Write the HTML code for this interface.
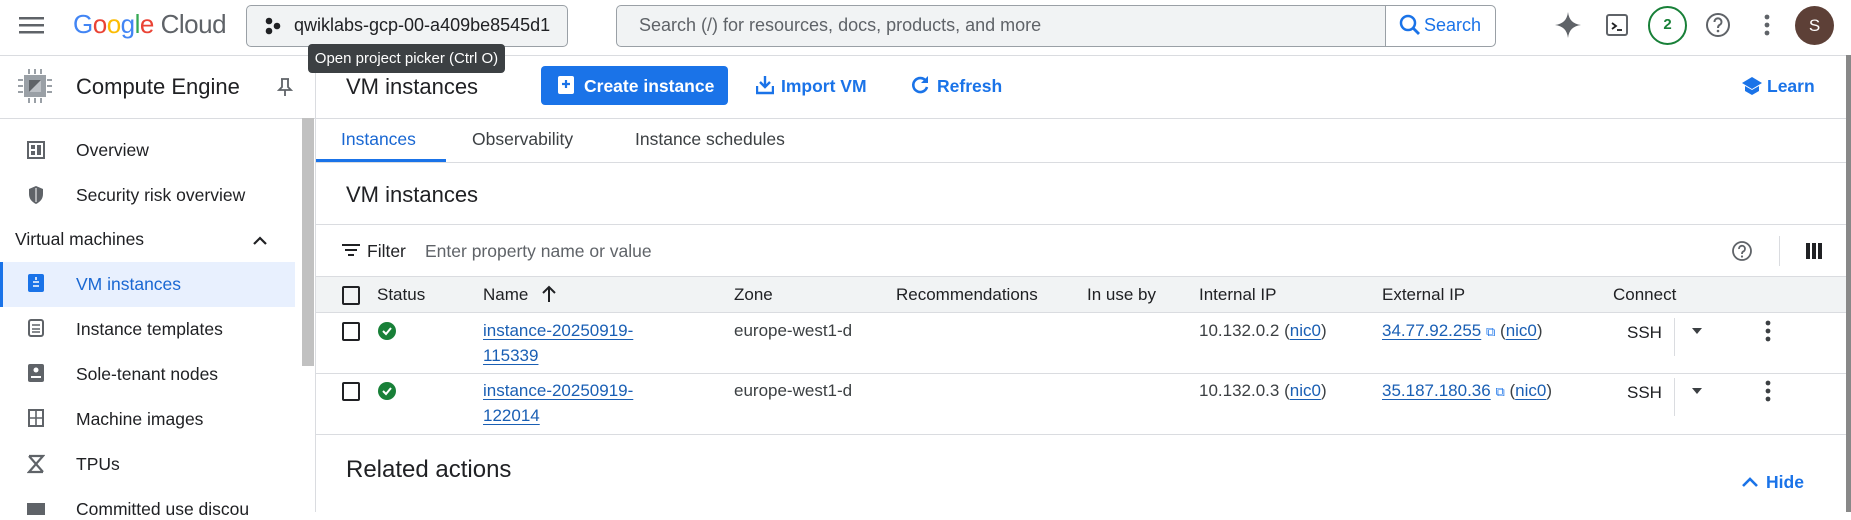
<!DOCTYPE html>
<html><head><meta charset="utf-8"><style>
*{box-sizing:border-box;margin:0;padding:0}
body{width:1851px;height:512px;overflow:hidden;background:#fff;font-family:"Liberation Sans",Arial,sans-serif;color:#202124;position:relative}
.a{position:absolute;white-space:nowrap}
.l{color:#1a73e8}
.lk{color:#1a5fb4;text-decoration:underline;text-underline-offset:3px}
.g{color:#5f6368}
.ic{position:absolute}
</style></head><body>
<!-- top bar -->
<div class="a" style="left:0;top:55px;width:1851px;height:1px;background:#dadce0"></div>
<svg class="ic" style="left:19px;top:15px" width="25" height="20" viewBox="0 0 25 20"><rect y="2" width="25" height="2.5" fill="#5f6368"/><rect y="9" width="25" height="2.5" fill="#5f6368"/><rect y="16" width="25" height="2.5" fill="#5f6368"/></svg>
<div class="a" style="left:73px;top:9px;font-size:26px;letter-spacing:-0.5px"><span style="color:#4285f4">G</span><span style="color:#ea4335">o</span><span style="color:#fbbc04">o</span><span style="color:#4285f4">g</span><span style="color:#34a853">l</span><span style="color:#ea4335">e</span> <span style="color:#5f6368">Cloud</span></div>
<div class="a" style="left:246px;top:5px;width:322px;height:42px;border:1px solid #9aa0a6;border-radius:5px;background:#f1f3f4"></div>
<svg class="ic" style="left:265px;top:17px" width="18" height="18" viewBox="0 0 18 18"><circle cx="4" cy="4" r="3.3" fill="#202124"/><circle cx="12" cy="9" r="3.3" fill="#202124"/><circle cx="4" cy="14" r="3.3" fill="#202124"/></svg>
<div class="a" style="left:294px;top:15px;font-size:18px">qwiklabs-gcp-00-a409be8545d1</div>
<div class="a" style="left:616px;top:5px;width:880px;height:42px;border:1px solid #9aa0a6;border-radius:5px;background:#f1f3f4"></div>
<div class="a" style="left:1385px;top:6px;width:110px;height:40px;background:#fff;border-left:1px solid #9aa0a6;border-radius:0 5px 5px 0"></div>
<div class="a g" style="left:639px;top:15px;font-size:18px">Search (/) for resources, docs, products, and more</div>
<svg class="ic" style="left:1398px;top:13px" width="24" height="24" viewBox="0 0 24 24"><circle cx="10" cy="10" r="7" fill="none" stroke="#1a73e8" stroke-width="2.5"/><path d="M15 15l6 6" stroke="#1a73e8" stroke-width="2.8"/></svg>
<div class="a l" style="left:1424px;top:15px;font-size:18px">Search</div>
<svg class="ic" style="left:1554px;top:11px" width="28" height="28" viewBox="0 0 28 28"><path d="M14 1C15 9 19 13 27 14 19 15 15 19 14 27 13 19 9 15 1 14 9 13 13 9 14 1Z" fill="#5f6368"/></svg>
<svg class="ic" style="left:1606px;top:14px" width="22" height="22" viewBox="0 0 22 22"><rect x="1" y="1" width="20" height="20" rx="2" fill="none" stroke="#5f6368" stroke-width="2"/><path d="M6 9l4 3-4 3" fill="none" stroke="#202124" stroke-width="1.8"/><path d="M11 16h5" stroke="#202124" stroke-width="1.8"/></svg>
<div class="a" style="left:1648px;top:6px;width:39px;height:39px;border:2.5px solid #188038;border-radius:50%;color:#188038;font-size:15px;font-weight:bold;text-align:center;line-height:34px">2</div>
<svg class="ic" style="left:1705px;top:12px" width="26" height="26" viewBox="0 0 26 26"><circle cx="13" cy="13" r="11" fill="none" stroke="#5f6368" stroke-width="2"/><path d="M9.5 10a3.5 3.5 0 1 1 5 3c-1.2.7-1.5 1.3-1.5 3" fill="none" stroke="#5f6368" stroke-width="2"/><circle cx="13" cy="19" r="1.3" fill="#5f6368"/></svg>
<svg class="ic" style="left:1763px;top:13px" width="8" height="24" viewBox="0 0 8 24"><circle cx="4" cy="4" r="2.4" fill="#5f6368"/><circle cx="4" cy="12" r="2.4" fill="#5f6368"/><circle cx="4" cy="20" r="2.4" fill="#5f6368"/></svg>
<div class="a" style="left:1795px;top:6px;width:39px;height:39px;border-radius:50%;background:#5d4037;color:#fff;font-size:17px;text-align:center;line-height:39px">S</div>
<div class="a" style="left:1846px;top:55px;width:5px;height:457px;background:#888"></div>

<!-- sidebar -->
<div class="a" style="left:315px;top:55px;width:1px;height:457px;background:#dadce0"></div>
<div class="a" style="left:0;top:118px;width:315px;height:1px;background:#dadce0"></div>
<svg class="ic" style="left:17px;top:68px" width="36" height="36" viewBox="0 0 36 36"><rect x="7" y="7" width="22" height="22" fill="#9aa0a6"/><rect x="12" y="12" width="12" height="12" fill="#5f6368"/><path d="M12 24L24 12V24Z" fill="#bdc1c6"/><g stroke="#9aa0a6" stroke-width="2"><path d="M12 1v5M18 1v5M24 1v5M12 30v5M18 30v5M24 30v5M1 12h5M1 18h5M1 24h5M30 12h5M30 18h5M30 24h5"/></g></svg>
<div class="a" style="left:76px;top:74px;font-size:22px">Compute Engine</div>
<svg class="ic" style="left:277px;top:77px" width="16" height="20" viewBox="0 0 16 20"><path d="M4 2h8M5 2v8l-3 3h12l-3-3V2M8 13v6" fill="none" stroke="#5f6368" stroke-width="1.8"/></svg>
<div class="a" style="left:302px;top:118px;width:12px;height:248px;background:#c1c1c1"></div>
<div class="a" style="left:0;top:262px;width:295px;height:45px;background:#e8f0fe;border-left:3px solid #1a73e8"></div>
<svg class="ic" style="left:27px;top:141px" width="18" height="18" viewBox="0 0 18 18"><rect x="1" y="1" width="16" height="16" fill="none" stroke="#5f6368" stroke-width="2"/><rect x="4" y="4" width="4" height="4" fill="#5f6368"/><rect x="10" y="4" width="4" height="10" fill="#5f6368"/><rect x="4" y="10" width="4" height="4" fill="#5f6368"/></svg>
<div class="a" style="left:76px;top:140px;font-size:17.5px">Overview</div>
<svg class="ic" style="left:28px;top:185px" width="16" height="20" viewBox="0 0 16 20"><path d="M8 1L1 4v5c0 5 3 8 7 10 4-2 7-5 7-10V4Z" fill="#5f6368"/><path d="M8 3v14" stroke="#fff" stroke-width="1"/></svg>
<div class="a" style="left:76px;top:185px;font-size:17.5px">Security risk overview</div>
<div class="a" style="left:15px;top:229px;font-size:17.5px;font-weight:500">Virtual machines</div>
<svg class="ic" style="left:252px;top:234px" width="16" height="12" viewBox="0 0 16 12"><path d="M2 10l6-6 6 6" fill="none" stroke="#202124" stroke-width="2.2"/></svg>
<svg class="ic" style="left:28px;top:274px" width="16" height="20" viewBox="0 0 16 20"><rect x="0" y="0" width="16" height="18" rx="2" fill="#1a73e8"/><path d="M5 8h6M5 12h6" stroke="#fff" stroke-width="1.6"/><path d="M8 3v3" stroke="#fff" stroke-width="1.6"/></svg>
<div class="a l" style="left:76px;top:274px;font-size:17.5px;color:#1967d2">VM instances</div>
<svg class="ic" style="left:28px;top:319px" width="16" height="20" viewBox="0 0 16 20"><rect x="1" y="1" width="14" height="16" rx="2" fill="none" stroke="#5f6368" stroke-width="2"/><path d="M4 6h8M4 10h8M4 13h8" stroke="#5f6368" stroke-width="1.6"/></svg>
<div class="a" style="left:76px;top:319px;font-size:17.5px">Instance templates</div>
<svg class="ic" style="left:28px;top:364px" width="16" height="20" viewBox="0 0 16 20"><rect x="0" y="0" width="16" height="18" rx="2" fill="#5f6368"/><circle cx="8" cy="6" r="2.5" fill="#fff"/><path d="M3 13h10" stroke="#fff" stroke-width="2"/></svg>
<div class="a" style="left:76px;top:364px;font-size:17.5px">Sole-tenant nodes</div>
<svg class="ic" style="left:28px;top:409px" width="16" height="20" viewBox="0 0 16 20"><rect x="1" y="1" width="14" height="16" fill="none" stroke="#5f6368" stroke-width="2"/><path d="M8 2v14M2 9h12" stroke="#5f6368" stroke-width="1.6"/></svg>
<div class="a" style="left:76px;top:409px;font-size:17.5px">Machine images</div>
<svg class="ic" style="left:27px;top:454px" width="18" height="20" viewBox="0 0 18 20"><path d="M2 2h14L2 18h14M2 2l14 16" fill="none" stroke="#5f6368" stroke-width="2.2"/></svg>
<div class="a" style="left:76px;top:454px;font-size:17.5px">TPUs</div>
<div class="a" style="left:27px;top:503px;width:18px;height:12px;background:#5f6368"></div>
<div class="a" style="left:76px;top:499px;font-size:17.5px">Committed use discou</div>

<!-- main header -->
<div class="a" style="left:346px;top:74px;font-size:22px">VM instances</div>
<div class="a" style="left:541px;top:66px;width:187px;height:39px;background:#1a73e8;border-radius:4px"></div>
<svg class="ic" style="left:558px;top:76px" width="16" height="20" viewBox="0 0 16 20"><rect x="0" y="0" width="16" height="18" rx="2" fill="#fff"/><path d="M8 4v8M4 8h8" stroke="#1a73e8" stroke-width="2.2"/></svg>
<div class="a" style="left:584px;top:76px;font-size:17.5px;color:#fff;font-weight:bold">Create instance</div>
<svg class="ic" style="left:756px;top:75px" width="18" height="20" viewBox="0 0 18 20"><path d="M9 1v10M4 7l5 5 5-5" fill="none" stroke="#1a73e8" stroke-width="2.4"/><path d="M1 11v7h16v-7" fill="none" stroke="#1a73e8" stroke-width="2.4"/></svg>
<div class="a l" style="left:781px;top:76px;font-size:17.5px;font-weight:bold">Import VM</div>
<svg class="ic" style="left:910px;top:75px" width="20" height="20" viewBox="0 0 20 20"><path d="M16 6A7 7 0 1 0 17 12" fill="none" stroke="#1a73e8" stroke-width="2.6"/><path d="M18 1v7h-7Z" fill="#1a73e8"/></svg>
<div class="a l" style="left:937px;top:76px;font-size:17.5px;font-weight:bold">Refresh</div>
<svg class="ic" style="left:1741px;top:76px" width="22" height="20" viewBox="0 0 22 20"><path d="M11 1L1 7l10 6 10-6Z" fill="#1a73e8"/><path d="M4 10v5l7 4 7-4v-5l-7 4Z" fill="#1a73e8"/></svg>
<div class="a l" style="left:1767px;top:76px;font-size:17.5px;font-weight:bold">Learn</div>
<div class="a" style="left:316px;top:118px;width:1530px;height:1px;background:#dadce0"></div>
<!-- tabs -->
<div class="a" style="left:341px;top:129px;font-size:17.5px;color:#1967d2">Instances</div>
<div class="a" style="left:316px;top:159px;width:130px;height:3px;background:#1a73e8"></div>
<div class="a g" style="left:472px;top:129px;font-size:17.5px;color:#3c4043">Observability</div>
<div class="a g" style="left:635px;top:129px;font-size:17.5px;color:#3c4043">Instance schedules</div>
<div class="a" style="left:316px;top:162px;width:1530px;height:1px;background:#dadce0"></div>
<div class="a" style="left:346px;top:182px;font-size:22px">VM instances</div>
<div class="a" style="left:316px;top:224px;width:1530px;height:1px;background:#dadce0"></div>
<!-- filter -->
<svg class="ic" style="left:342px;top:243px" width="18" height="14" viewBox="0 0 18 14"><path d="M0 2h18M3 7h12M6 12h6" stroke="#202124" stroke-width="2"/></svg>
<div class="a" style="left:367px;top:241px;font-size:17.5px;font-weight:500">Filter</div>
<div class="a g" style="left:425px;top:241px;font-size:17.5px">Enter property name or value</div>
<svg class="ic" style="left:1731px;top:240px" width="22" height="22" viewBox="0 0 22 22"><circle cx="11" cy="11" r="9" fill="none" stroke="#5f6368" stroke-width="1.8"/><path d="M8 9a3 3 0 1 1 4 2.6c-.8.5-1 1-1 2.4" fill="none" stroke="#5f6368" stroke-width="1.8"/><circle cx="11" cy="16.5" r="1.1" fill="#5f6368"/></svg>
<div class="a" style="left:1779px;top:236px;width:1px;height:30px;background:#dadce0"></div>
<svg class="ic" style="left:1806px;top:243px" width="16" height="16" viewBox="0 0 16 16"><rect x="0" y="0" width="4" height="16" fill="#202124"/><rect x="6" y="0" width="4" height="16" fill="#202124"/><rect x="12" y="0" width="4" height="16" fill="#202124"/></svg>
<!-- table header -->
<div class="a" style="left:316px;top:276px;width:1530px;height:37px;background:#f1f3f4;border-top:1px solid #dadce0;border-bottom:1px solid #dadce0"></div>
<div class="a" style="left:342px;top:286px;width:18px;height:19px;border:2px solid #202124;border-radius:2px"></div>
<div class="a" style="left:377px;top:285px;font-size:17px">Status</div>
<div class="a" style="left:483px;top:285px;font-size:17px">Name</div>
<svg class="ic" style="left:541px;top:285px" width="16" height="18" viewBox="0 0 16 18"><path d="M8 17V2M2 8l6-6 6 6" fill="none" stroke="#202124" stroke-width="2"/></svg>
<div class="a" style="left:734px;top:285px;font-size:17px">Zone</div>
<div class="a" style="left:896px;top:285px;font-size:17px">Recommendations</div>
<div class="a" style="left:1087px;top:285px;font-size:17px">In use by</div>
<div class="a" style="left:1199px;top:285px;font-size:17px">Internal IP</div>
<div class="a" style="left:1382px;top:285px;font-size:17px">External IP</div>
<div class="a" style="left:1613px;top:285px;font-size:17px">Connect</div>
<!-- rows -->
<div class="a" style="left:316px;top:373px;width:1530px;height:1px;background:#dadce0"></div>
<div class="a" style="left:316px;top:434px;width:1530px;height:1px;background:#dadce0"></div>

<div class="a" style="left:342px;top:322px;width:18px;height:19px;border:2px solid #202124;border-radius:2px"></div>
<svg class="ic" style="left:378px;top:322px" width="18" height="18" viewBox="0 0 18 18"><circle cx="9" cy="9" r="9" fill="#188038"/><path d="M5 9l3 3 5-6" fill="none" stroke="#fff" stroke-width="2"/></svg>
<div class="a lk" style="left:483px;top:321px;font-size:17px">instance-20250919-</div>
<div class="a lk" style="left:483px;top:346px;font-size:17px">115339</div>
<div class="a g" style="left:734px;top:321px;font-size:17px;color:#3c4043">europe-west1-d</div>
<div class="a" style="left:1199px;top:321px;font-size:17px;color:#3c4043">10.132.0.2 (<span class="lk">nic0</span>)</div>
<div class="a" style="left:1382px;top:321px;font-size:17px;color:#3c4043"><span class="lk">34.77.92.255</span> <span style="font-size:13px;color:#1a73e8">⧉</span> (<span class="lk">nic0</span>)</div>
<div class="a" style="left:1627px;top:323px;font-size:17px">SSH</div>
<div class="a" style="left:1674px;top:318px;width:1px;height:38px;background:#dadce0"></div>
<svg class="ic" style="left:1691px;top:327px" width="12" height="8" viewBox="0 0 12 8"><path d="M1 1h10L6 7Z" fill="#3c4043"/></svg>
<svg class="ic" style="left:1764px;top:320px" width="8" height="22" viewBox="0 0 8 22"><circle cx="4" cy="3" r="2.4" fill="#3c4043"/><circle cx="4" cy="11" r="2.4" fill="#3c4043"/><circle cx="4" cy="19" r="2.4" fill="#3c4043"/></svg>

<div class="a" style="left:342px;top:382px;width:18px;height:19px;border:2px solid #202124;border-radius:2px"></div>
<svg class="ic" style="left:378px;top:382px" width="18" height="18" viewBox="0 0 18 18"><circle cx="9" cy="9" r="9" fill="#188038"/><path d="M5 9l3 3 5-6" fill="none" stroke="#fff" stroke-width="2"/></svg>
<div class="a lk" style="left:483px;top:381px;font-size:17px">instance-20250919-</div>
<div class="a lk" style="left:483px;top:406px;font-size:17px">122014</div>
<div class="a g" style="left:734px;top:381px;font-size:17px;color:#3c4043">europe-west1-d</div>
<div class="a" style="left:1199px;top:381px;font-size:17px;color:#3c4043">10.132.0.3 (<span class="lk">nic0</span>)</div>
<div class="a" style="left:1382px;top:381px;font-size:17px;color:#3c4043"><span class="lk">35.187.180.36</span> <span style="font-size:13px;color:#1a73e8">⧉</span> (<span class="lk">nic0</span>)</div>
<div class="a" style="left:1627px;top:383px;font-size:17px">SSH</div>
<div class="a" style="left:1674px;top:378px;width:1px;height:38px;background:#dadce0"></div>
<svg class="ic" style="left:1691px;top:387px" width="12" height="8" viewBox="0 0 12 8"><path d="M1 1h10L6 7Z" fill="#3c4043"/></svg>
<svg class="ic" style="left:1764px;top:380px" width="8" height="22" viewBox="0 0 8 22"><circle cx="4" cy="3" r="2.4" fill="#3c4043"/><circle cx="4" cy="11" r="2.4" fill="#3c4043"/><circle cx="4" cy="19" r="2.4" fill="#3c4043"/></svg>

<div class="a" style="left:346px;top:456px;font-size:24px">Related actions</div>
<svg class="ic" style="left:1741px;top:476px" width="18" height="12" viewBox="0 0 18 12"><path d="M2 10l7-7 7 7" fill="none" stroke="#1a73e8" stroke-width="2.6"/></svg>
<div class="a l" style="left:1766px;top:472px;font-size:17.5px;font-weight:bold">Hide</div>

<!-- tooltip -->
<div class="a" style="left:308px;top:44px;width:197px;height:29px;background:#3c4043;border-radius:4px;color:#fff;font-size:15px;line-height:29px;text-align:center">Open project picker (Ctrl O)</div>
</body></html>
